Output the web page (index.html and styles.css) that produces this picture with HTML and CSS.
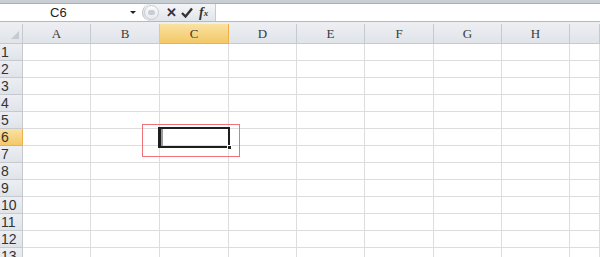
FILE: index.html
```html
<!DOCTYPE html>
<html lang="en">
<head>
    <meta charset="UTF-8">
    <title>Sheet1</title>
    <link rel="stylesheet" href="styles.css">
</head>
<body>
    <div class="window">
        <div class="ribbon-edge"></div>

        <div class="formula-bar">
            <div class="name-box">
                <span class="name-text">C6</span>
                <span class="drop-arrow"></span>
            </div>
            <div class="fx-pill">
                <span class="grip"><span class="grip-dot"></span></span>
                <span class="fx-btn cancel">&#x2715;</span>
                <span class="fx-btn enter">
                    <svg width="12" height="11" viewBox="0 0 12 11"><path d="M1 6 L4.5 9.5 L11 1.5" fill="none" stroke="#333" stroke-width="2.4"/></svg>
                </span>
                <span class="fx-btn fx"><i>f</i><sub>x</sub></span>
            </div>
            <div class="formula-input"></div>
        </div>
        <div class="bar-gap"></div>

        <div class="sheet">
            <div class="row head-row">
                <div class="corner"><span class="corner-tri"></span></div>
                <div class="ch">A</div>
                <div class="ch">B</div>
                <div class="ch active">C</div>
                <div class="ch">D</div>
                <div class="ch">E</div>
                <div class="ch">F</div>
                <div class="ch">G</div>
                <div class="ch">H</div>
                <div class="ch last"></div>
            </div>

            <div class="row"><div class="rh">1</div><div class="c"></div><div class="c"></div><div class="c"></div><div class="c"></div><div class="c"></div><div class="c"></div><div class="c"></div><div class="c"></div><div class="c last"></div></div>
            <div class="row"><div class="rh">2</div><div class="c"></div><div class="c"></div><div class="c"></div><div class="c"></div><div class="c"></div><div class="c"></div><div class="c"></div><div class="c"></div><div class="c last"></div></div>
            <div class="row"><div class="rh">3</div><div class="c"></div><div class="c"></div><div class="c"></div><div class="c"></div><div class="c"></div><div class="c"></div><div class="c"></div><div class="c"></div><div class="c last"></div></div>
            <div class="row"><div class="rh">4</div><div class="c"></div><div class="c"></div><div class="c"></div><div class="c"></div><div class="c"></div><div class="c"></div><div class="c"></div><div class="c"></div><div class="c last"></div></div>
            <div class="row"><div class="rh">5</div><div class="c"></div><div class="c"></div><div class="c"></div><div class="c"></div><div class="c"></div><div class="c"></div><div class="c"></div><div class="c"></div><div class="c last"></div></div>
            <div class="row">
                <div class="rh active">6</div>
                <div class="c"></div>
                <div class="c"></div>
                <div class="c selected">
                    <span class="mark"></span>
                    <span class="cursor"><span class="fill-handle"></span></span>
                </div>
                <div class="c"></div><div class="c"></div><div class="c"></div><div class="c"></div><div class="c"></div><div class="c last"></div>
            </div>
            <div class="row"><div class="rh">7</div><div class="c"></div><div class="c"></div><div class="c"></div><div class="c"></div><div class="c"></div><div class="c"></div><div class="c"></div><div class="c"></div><div class="c last"></div></div>
            <div class="row"><div class="rh">8</div><div class="c"></div><div class="c"></div><div class="c"></div><div class="c"></div><div class="c"></div><div class="c"></div><div class="c"></div><div class="c"></div><div class="c last"></div></div>
            <div class="row"><div class="rh">9</div><div class="c"></div><div class="c"></div><div class="c"></div><div class="c"></div><div class="c"></div><div class="c"></div><div class="c"></div><div class="c"></div><div class="c last"></div></div>
            <div class="row"><div class="rh">10</div><div class="c"></div><div class="c"></div><div class="c"></div><div class="c"></div><div class="c"></div><div class="c"></div><div class="c"></div><div class="c"></div><div class="c last"></div></div>
            <div class="row"><div class="rh">11</div><div class="c"></div><div class="c"></div><div class="c"></div><div class="c"></div><div class="c"></div><div class="c"></div><div class="c"></div><div class="c"></div><div class="c last"></div></div>
            <div class="row"><div class="rh">12</div><div class="c"></div><div class="c"></div><div class="c"></div><div class="c"></div><div class="c"></div><div class="c"></div><div class="c"></div><div class="c"></div><div class="c last"></div></div>
            <div class="row"><div class="rh">13</div><div class="c"></div><div class="c"></div><div class="c"></div><div class="c"></div><div class="c"></div><div class="c"></div><div class="c"></div><div class="c"></div><div class="c last"></div></div>
        </div>
    </div>
</body>
</html>
```

FILE: styles.css
```css
* {
    box-sizing: border-box;
}

body {
    margin: 0;
    padding: 0;
    background-color: white;
    font-family: 'Liberation Sans', Arial, sans-serif;
    overflow: hidden;
}

.window {
    width: 600px;
    height: 257px;
    overflow: hidden;
}

.ribbon-edge {
    height: 4px;
    background-color: #c9ced5;
    border-bottom: 1px solid #a9b0b9;
}

/* formula bar */
.formula-bar {
    display: flex;
    height: 17px;
    background-color: white;
}

.name-box {
    width: 142px;
    display: flex;
    align-items: center;
}

.name-text {
    padding-left: 50px;
    font-size: 13px;
    color: #222;
}

.drop-arrow {
    margin-left: auto;
    margin-right: 6px;
    width: 0;
    height: 0;
    border-left: 3px solid transparent;
    border-right: 3px solid transparent;
    border-top: 3px solid #222;
}

.fx-pill {
    width: 74px;
    display: flex;
    align-items: center;
    background: linear-gradient(#f4f5f7, #e2e5e9);
    border: 1px solid #b9bfc7;
    border-right-color: #c6cbd1;
    border-top: none;
    border-bottom: none;
    border-radius: 9px 0 0 9px;
}

.grip {
    width: 15px;
    height: 15px;
    margin-left: 1px;
    border-radius: 50%;
    border: 1px solid #c7ccd3;
    background: linear-gradient(#fbfbfc, #e6e9ec);
    display: flex;
    align-items: center;
    justify-content: center;
}

.grip-dot {
    width: 7px;
    height: 5px;
    border-radius: 3px;
    background-color: #c9cdd3;
}

.fx-btn {
    display: flex;
    align-items: center;
    justify-content: center;
    color: #333;
}

.cancel {
    margin-left: 7px;
    font-size: 13px;
    font-weight: bold;
}

.enter {
    margin-left: 4px;
}

.fx {
    margin-left: 6px;
    font-family: 'Liberation Serif', serif;
    font-size: 14px;
    font-weight: bold;
}

.fx sub {
    font-size: 9px;
    font-style: italic;
    vertical-align: -2px;
}

.formula-input {
    flex: 1;
    background-color: white;
}

.bar-gap {
    height: 3px;
    border-top: 1px solid #b3b9c1;
    background-color: #eceef1;
}

/* sheet grid */
.row {
    display: flex;
    height: 17px;
}

.head-row {
    height: 20px;
}

.corner,
.rh,
.ch {
    background: linear-gradient(#eceef2, #e0e4e9);
    border-right: 1px solid #c5cad1;
    border-bottom: 1px solid #c5cad1;
}

.corner {
    flex: 0 0 23px;
    position: relative;
}

.corner-tri {
    position: absolute;
    right: 3px;
    bottom: 4px;
    width: 0;
    height: 0;
    border-left: 8px solid transparent;
    border-bottom: 8px solid #c6cbd2;
}

.ch {
    flex: 0 0 68px;
    display: flex;
    align-items: center;
    justify-content: center;
    font-family: 'Liberation Serif', serif;
    font-size: 13px;
    color: #3a3a3a;
    padding-top: 1px;
}

.rh {
    flex: 0 0 23px;
    font-size: 14px;
    line-height: 16px;
    color: #333;
    padding-left: 1px;
}

.ch.active,
.rh.active {
    background: linear-gradient(#fae2a1, #f3c868);
    border-right-color: #efb046;
    border-bottom-color: #efb046;
}

.c {
    flex: 0 0 68px;
    border-right: 1px solid #dcdddf;
    border-bottom: 1px solid #dcdddf;
}

/* columns B, C and F are one pixel wider */
.row > :nth-child(3),
.row > :nth-child(4),
.row > :nth-child(7) {
    flex-basis: 69px;
}

.ch.last,
.c.last {
    flex: 1;
}

.selected {
    position: relative;
}

.cursor {
    position: absolute;
    left: -2px;
    top: -2px;
    width: 72px;
    height: 21px;
    border: 2px solid #1e1e1e;
    border-left-width: 3px;
    z-index: 2;
}

.cursor::before {
    content: "";
    position: absolute;
    left: 0;
    top: 0;
    bottom: 0;
    width: 2px;
    background-color: #9a9a9a;
}

.fill-handle {
    position: absolute;
    right: -4px;
    bottom: -4px;
    width: 5px;
    height: 5px;
    background-color: #1e1e1e;
    border: 1px solid white;
}

.mark {
    position: absolute;
    left: -18px;
    top: -5px;
    width: 98px;
    height: 33px;
    border: 1px solid #ef7279;
    z-index: 3;
}
```
